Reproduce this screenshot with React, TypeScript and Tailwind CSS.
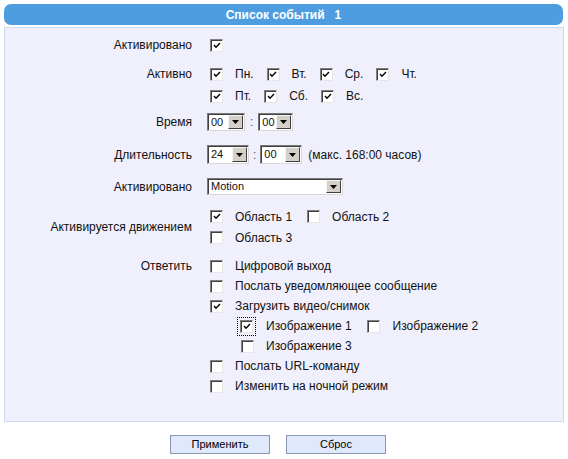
import type { ReactNode } from "react";

function Check({ on, focus }: { on?: boolean; focus?: boolean }) {
  return (
    <span
      className={
        focus
          ? "inline-flex ml-[3px] outline-1 outline-dotted outline-black outline-offset-[2px]"
          : "inline-flex ml-[3px]"
      }
    >
      <span className="w-[13px] h-[13px] bg-white border border-t-[#808080] border-l-[#808080] border-b-[#e6e6e6] border-r-[#e6e6e6] shadow-[inset_1px_1px_0_#404040] flex items-center justify-center">
        {on && (
          <svg width="8" height="7" viewBox="0 0 8 7">
            <path d="M1 3 L3 5.2 L7 1" stroke="#000" strokeWidth="1.4" fill="none" />
          </svg>
        )}
      </span>
    </span>
  );
}

function Select({ value, w, h = 18 }: { value: string; w: string; h?: number }) {
  return (
    <div
      className={`${w} flex items-center bg-white border border-t-[#7a7a7a] border-l-[#7a7a7a] border-b-[#d8d8d8] border-r-[#d8d8d8] shadow-[inset_1px_1px_0_#404040]`}
      style={{ height: h }}
    >
      <span className="flex-1 pl-[3px] text-[11px] leading-none">{value}</span>
      <span className="w-[15px] h-[calc(100%-2px)] mr-[1px] bg-[#d4d0c8] border border-t-[#f4f4f4] border-l-[#f4f4f4] border-b-[#404040] border-r-[#404040] flex items-center justify-center">
        <svg width="7" height="4" viewBox="0 0 7 4">
          <path d="M0 0 H7 L3.5 4 Z" fill="#000" />
        </svg>
      </span>
    </div>
  );
}

function Row({
  label,
  children,
  className = "",
  center,
}: {
  label: string;
  children: ReactNode;
  className?: string;
  center?: boolean;
}) {
  return (
    <div className={"flex " + className}>
      <div
        className={
          center
            ? "w-[187px] flex items-center justify-end"
            : "w-[187px] h-[20px] flex items-center justify-end"
        }
      >
        {label}
      </div>
      <div className="ml-[15px]">{children}</div>
    </div>
  );
}

function Item({ on, label, gap = "mr-[10px]" }: { on?: boolean; label: string; gap?: string }) {
  return (
    <>
      <Check on={on} />
      <span className={"ml-[12px] " + gap}>{label}</span>
    </>
  );
}

export default function App() {
  return (
    <div className="min-h-[459px] bg-white pt-[4px] px-[4px] font-['Liberation_Sans',Arial,sans-serif] text-[12px] text-[#111]">
      {/* title */}
      <div className="w-[559px] h-[21px] rounded-[7px] bg-[#4e9de0] text-white font-bold flex items-center justify-center">
        Список событий&nbsp;&nbsp;&nbsp;1
      </div>

      <div className="mt-[2px] w-[560px] border border-[#c6daf2] bg-[#f0f0fc] pt-[7px] pb-[25px]">
        <Row label="Активировано">
          <div className="h-[20px] flex items-center">
            <Check on />
          </div>
        </Row>

        {/* days */}
        <Row label="Активно" className="mt-[9px]">
          <div className="h-[20px] flex items-center">
            <Item on label="Пн." />
            <Item on label="Вт." />
            <Item on label="Ср." />
            <Item on label="Чт." />
          </div>
          <div className="h-[22px] mt-[1px] flex items-center">
            <Item on label="Пт." />
            <Item on label="Сб." />
            <Item on label="Вс." />
          </div>
        </Row>

        <Row label="Время" className="mt-[6px]" center>
          <div className="flex items-center">
            <Select value="00" w="w-[38px]" />
            <span className="mx-[5px] text-[#555]">:</span>
            <Select value="00" w="w-[35px]" />
          </div>
        </Row>

        <Row label="Длительность" className="mt-[14px]" center>
          <div className="flex items-center">
            <Select value="24" w="w-[42px]" h={19} />
            <span className="mx-[4px] text-[#555]">:</span>
            <Select value="00" w="w-[42px]" h={19} />
            <span className="ml-[6px]">(макс. 168:00 часов)</span>
          </div>
        </Row>

        <Row label="Активировано" className="mt-[14px]" center>
          <Select value="Motion" w="w-[136px]" h={17} />
        </Row>

        {/* motion areas */}
        <Row label="Активируется движением" className="mt-[10px]" center>
          <div className="h-[21px] flex items-center">
            <Item on label="Область 1" gap="mr-[12px]" />
            <Item label="Область 2" />
          </div>
          <div className="h-[21px] flex items-center">
            <Item label="Область 3" />
          </div>
        </Row>

        {/* responses */}
        <Row label="Ответить" className="mt-[8px]">
          <div className="h-[20px] flex items-center">
            <Item label="Цифровой выход" />
          </div>
          <div className="h-[20px] flex items-center">
            <Item label="Послать уведомляющее сообщение" />
          </div>
          <div className="h-[20px] flex items-center">
            <Item on label="Загрузить видео/снимок" />
          </div>
          <div className="h-[20px] flex items-center pl-[30px]">
            <Check on focus />
            <span className="ml-[13px] mr-[12px]">Изображение 1</span>
            <Check />
            <span className="ml-[13px]">Изображение 2</span>
          </div>
          <div className="h-[20px] flex items-center pl-[31px]">
            <Check />
            <span className="ml-[12px]">Изображение 3</span>
          </div>
          <div className="h-[20px] flex items-center">
            <Item label="Послать URL-команду" />
          </div>
          <div className="h-[20px] flex items-center">
            <Item label="Изменить на ночной режим" />
          </div>
        </Row>
      </div>

      {/* buttons */}
      <div className="mt-[13px] ml-[166px] flex gap-[16px] text-[11px]">
        <button className="w-[100px] h-[19px] bg-[#e0e8fc] border border-[#8a96b4] text-black leading-none">
          Применить
        </button>
        <button className="w-[100px] h-[19px] bg-[#e0e8fc] border border-[#8a96b4] text-black leading-none">
          Сброс
        </button>
      </div>
    </div>
  );
}
